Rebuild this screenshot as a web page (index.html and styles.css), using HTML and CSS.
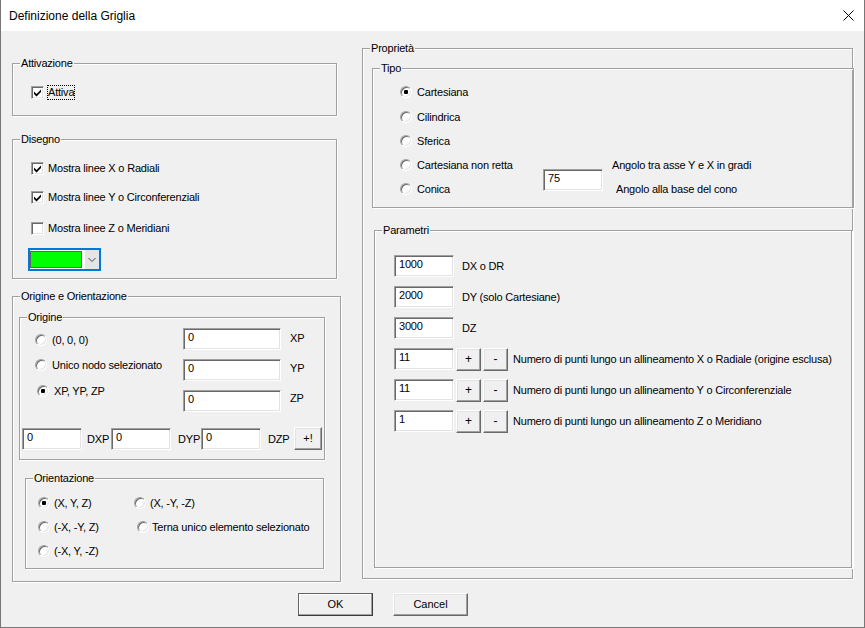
FILE: index.html
```html
<!DOCTYPE html>
<html lang="it">
<head>
<meta charset="utf-8">
<title>Definizione della Griglia</title>
<link rel="stylesheet" href="styles.css">
</head>
<body>
<div class="win">
  <div class="titlebar">
    <span class="title">Definizione della Griglia</span>
    <svg class="close" width="11" height="11" viewBox="0 0 11 11"><path d="M0.5 0.5 L10.5 10.5 M10.5 0.5 L0.5 10.5" stroke="#000" stroke-width="1" fill="none"/></svg>
  </div>
  <div class="client">
    <div class="main">
      <div class="col-left">
        <div class="group g-att">
          <div class="legend">Attivazione</div>
          <div class="chk att-row"><span class="cb"><svg width="13" height="13" viewBox="0 0 13 13"><path d="M3 5.5 L5.5 8 L10 3.5 L10 6 L5.5 10.5 L3 8 Z" fill="#000"/></svg></span><span class="lbl focus">Attiva</span></div>
        </div>
        <div class="group g-dis">
          <div class="legend">Disegno</div>
          <div class="chk dis-1"><span class="cb"><svg width="13" height="13" viewBox="0 0 13 13"><path d="M3 5.5 L5.5 8 L10 3.5 L10 6 L5.5 10.5 L3 8 Z" fill="#000"/></svg></span><span class="lbl">Mostra linee X o Radiali</span></div>
          <div class="chk dis-2"><span class="cb"><svg width="13" height="13" viewBox="0 0 13 13"><path d="M3 5.5 L5.5 8 L10 3.5 L10 6 L5.5 10.5 L3 8 Z" fill="#000"/></svg></span><span class="lbl">Mostra linee Y o Circonferenziali</span></div>
          <div class="chk dis-3"><span class="cb"></span><span class="lbl">Mostra linee Z o Meridiani</span></div>
          <div class="combo">
            <span class="swatch"></span>
            <span class="drop"><svg width="14" height="17" viewBox="0 0 14 17"><path d="M3.5 7 L7 10.5 L10.5 7" stroke="#444" stroke-width="1" fill="none"/></svg></span>
          </div>
        </div>
        <div class="group g-oo">
          <div class="legend">Origine e Orientazione</div>
          <div class="group g-orig">
            <div class="legend">Origine</div>
            <div class="orig-top">
              <div class="orig-rad">
                <div class="rad or-1"><span class="rb"></span><span class="rl">(0, 0, 0)</span></div>
                <div class="rad or-2"><span class="rb"></span><span class="rl">Unico nodo selezionato</span></div>
                <div class="rad or-3"><span class="rb on"></span><span class="rl">XP, YP, ZP</span></div>
              </div>
              <div class="orig-edits">
                <div class="edit e98 oe-1">0</div>
                <div class="edit e98 oe-2">0</div>
                <div class="edit e98 oe-3">0</div>
              </div>
              <div class="orig-lbls">
                <div class="ol ol-1">XP</div>
                <div class="ol ol-2">YP</div>
                <div class="ol ol-3">ZP</div>
              </div>
            </div>
            <div class="orig-bot">
              <div class="edit e60">0</div>
              <span class="dl dl-x">DXP</span>
              <div class="edit e60">0</div>
              <span class="dl dl-y">DYP</span>
              <div class="edit e60">0</div>
              <span class="dl dl-z">DZP</span>
              <button class="btn b-plus">+!</button>
            </div>
          </div>
          <div class="group g-orient">
            <div class="legend">Orientazione</div>
            <div class="orient-grid">
              <div class="rad o4"><span class="rb on"></span><span class="rl">(X, Y, Z)</span></div>
              <div class="rad o4"><span class="rb"></span><span class="rl">(X, -Y, -Z)</span></div>
              <div class="rad o4"><span class="rb"></span><span class="rl">(-X, -Y, Z)</span></div>
              <div class="rad o3 terna"><span class="rb"></span><span class="rl">Terna unico elemento selezionato</span></div>
              <div class="rad o4"><span class="rb"></span><span class="rl">(-X, Y, -Z)</span></div>
            </div>
          </div>
        </div>
      </div>
      <div class="col-right">
        <div class="group g-prop">
          <div class="legend">Proprietà</div>
          <div class="group g-tipo">
            <div class="legend">Tipo</div>
            <div class="tipo-body">
              <div class="tipo-rad">
                <div class="rad tr-1"><span class="rb on"></span><span class="rl">Cartesiana</span></div>
                <div class="rad tr-n"><span class="rb"></span><span class="rl">Cilindrica</span></div>
                <div class="rad tr-m"><span class="rb"></span><span class="rl">Sferica</span></div>
                <div class="rad tr-m"><span class="rb"></span><span class="rl">Cartesiana non retta</span></div>
                <div class="rad tr-m"><span class="rb"></span><span class="rl">Conica</span></div>
              </div>
              <div class="tipo-edit"><div class="edit e60">75</div></div>
              <div class="tipo-lbls">
                <div class="tl-1">Angolo tra asse Y e X in gradi</div>
                <div class="tl-2">Angolo alla base del cono</div>
              </div>
            </div>
          </div>
          <div class="group g-param">
            <div class="legend">Parametri</div>
            <div class="prow p-first"><div class="edit e60">1000</div><span class="pl">DX o DR</span></div>
            <div class="prow"><div class="edit e60">2000</div><span class="pl">DY (solo Cartesiane)</span></div>
            <div class="prow"><div class="edit e60">3000</div><span class="pl">DZ</span></div>
            <div class="prow"><div class="edit e60">11</div><button class="btn b-pm">+</button><button class="btn b-pm">-</button><span class="pl2">Numero di punti lungo un allineamento X o Radiale (origine esclusa)</span></div>
            <div class="prow"><div class="edit e60">11</div><button class="btn b-pm">+</button><button class="btn b-pm">-</button><span class="pl2">Numero di punti lungo un allineamento Y o Circonferenziale</span></div>
            <div class="prow"><div class="edit e60">1</div><button class="btn b-pm">+</button><button class="btn b-pm">-</button><span class="pl2">Numero di punti lungo un allineamento Z o Meridiano</span></div>
          </div>
        </div>
      </div>
    </div>
    <div class="btnbar">
      <button class="btn b-dlg b-default">OK</button>
      <button class="btn b-dlg b-cancel">Cancel</button>
    </div>
  </div>
</div>
</body>
</html>
```

FILE: styles.css
```css
body {
  margin: 0;
  background: #ffffff;
}

.win {
  width: 865px;
  height: 628px;
  box-sizing: border-box;
  border: 1px solid #777777;
  border-top: none;
  display: flex;
  flex-direction: column;
  font-family: "Liberation Sans", Arial, sans-serif;
  font-size: 11px;
  color: #000000;
  letter-spacing: -0.2px;
}

.titlebar {
  height: 31px;
  flex: none;
  background: #ffffff;
  display: flex;
  align-items: center;
  padding-left: 8px;
  padding-right: 10px;
  font-size: 12px;
  letter-spacing: 0;
}

.title {
  flex: 1;
  line-height: 16px;
}

.close {
  display: block;
  margin-top: 0;
}

.client {
  flex: 1;
  background: #f0f0f0;
  padding-left: 11px;
  display: flex;
  flex-direction: column;
}

.main {
  display: flex;
  align-items: flex-start;
}

.col-left {
  width: 329px;
  display: flex;
  flex-direction: column;
  align-items: flex-start;
}

.col-right {
  margin-left: 21px;
}

/* group boxes */
.group {
  box-sizing: border-box;
  border: 1px solid #a0a0a0;
  box-shadow: inset 1px 1px #ffffff, 1px 1px #ffffff;
  display: flex;
  flex-direction: column;
  align-items: flex-start;
  flex: none;
}

.legend {
  margin: -7px 0 0 7px;
  padding: 0 1px;
  height: 13px;
  line-height: 13px;
  background: #f0f0f0;
  white-space: nowrap;
}

.g-att { width: 325px; height: 53px; margin-top: 32px; }
.g-dis { width: 325px; height: 140px; margin-top: 23px; }
.g-oo { width: 329px; height: 286px; margin-top: 17px; }
.g-orig { width: 306px; height: 143px; margin: 14px 0 0 6px; }
.g-orient { width: 299px; height: 91px; margin: 18px 0 0 12px; }
.g-prop { width: 491px; height: 531px; margin-top: 17px; }
.g-tipo { width: 482px; height: 140px; margin: 13px 0 0 9px; }
.g-param { width: 478px; height: 338px; margin: 22px 0 0 11px; }

/* checkboxes */
.chk {
  display: flex;
  align-items: center;
  height: 13px;
  margin-left: 18px;
}

.att-row { margin-top: 16px; }
.dis-1 { margin-top: 16px; }
.dis-2 { margin-top: 16px; }
.dis-3 { margin-top: 18px; }

.cb {
  box-sizing: border-box;
  width: 13px;
  height: 13px;
  flex: none;
  position: relative;
  background: #ffffff;
  border: 1px solid;
  border-color: #a0a0a0 #ffffff #ffffff #a0a0a0;
  box-shadow: inset 1px 1px #696969, inset -1px -1px #e3e3e3;
}

.cb svg {
  display: block;
  margin: -1px 0 0 -1px;
}

.lbl {
  margin-left: 4px;
  line-height: 13px;
  white-space: nowrap;
  border: 1px solid transparent;
  margin-left: 3px;
}

.lbl.focus {
  border: 1px dotted #000000;
  line-height: 13px;
}

/* color combo */
.combo {
  box-sizing: border-box;
  width: 73px;
  height: 23px;
  margin: 13px 0 0 15px;
  border: 2px solid #0078d7;
  background: #ffffff;
  display: flex;
  align-items: flex-start;
}

.swatch {
  box-sizing: border-box;
  width: 52px;
  height: 17px;
  margin-top: 1px;
  background: #00ff00;
  border: 1px solid #646464;
}

.drop {
  margin-left: auto;
  width: 14px;
  height: 19px;
  background: #e5e5e5;
  display: flex;
  align-items: center;
}

.drop svg { display: block; }

/* radios */
.rad {
  display: flex;
  align-items: center;
  height: 12px;
}

.rb {
  box-sizing: border-box;
  width: 12px;
  height: 12px;
  flex: none;
  border-radius: 50%;
  background: #ffffff;
  border: 1px solid;
  border-color: #a0a0a0 #ffffff #ffffff #a0a0a0;
  box-shadow: inset 1px 1px #696969, inset -1px -1px #e3e3e3;
  display: flex;
  align-items: center;
  justify-content: center;
}

.rb.on::after {
  content: "";
  width: 4px;
  height: 4px;
  border-radius: 1px;
  background: #000000;
}

.rl {
  margin-left: 5px;
  line-height: 13px;
  white-space: nowrap;
}

.o4 .rl { margin-left: 4px; }
.o3 .rl { margin-left: 3px; }

/* edit boxes */
.edit {
  box-sizing: border-box;
  height: 22px;
  flex: none;
  background: #ffffff;
  border: 1px solid;
  border-color: #a0a0a0 #ffffff #ffffff #a0a0a0;
  box-shadow: inset 1px 1px #696969, inset -1px -1px #e3e3e3;
  padding: 2px 0 0 4px;
  line-height: 13px;
  white-space: nowrap;
}

.e98 { width: 98px; }
.e60 { width: 60px; }

/* Origine */
.orig-top {
  display: flex;
  align-items: flex-start;
}

.orig-rad {
  width: 163px;
  box-sizing: border-box;
  padding-left: 15px;
}

.or-1 { margin-top: 10px; }
.or-2 { margin-top: 13px; }
.or-3 { margin-top: 14px; margin-left: 2px; }

.oe-1 { margin-top: 4px; }
.oe-2, .oe-3 { margin-top: 9px; }

.orig-lbls { padding-left: 9px; }
.ol { line-height: 13px; }
.ol-1 { margin-top: 8px; }
.ol-2 { margin-top: 17px; }
.ol-3 { margin-top: 17px; }

.orig-bot {
  display: flex;
  align-items: center;
  margin: 15px 0 0 2px;
}

.dl {
  box-sizing: border-box;
  line-height: 13px;
  padding-top: 1px;
}

.dl-x { width: 29px; padding-left: 5px; }
.dl-y { width: 30px; padding-left: 7px; }
.dl-z { width: 33px; padding-left: 7px; }

/* buttons */
.btn {
  box-sizing: border-box;
  margin: 0;
  padding: 0;
  font-family: "Liberation Sans", Arial, sans-serif;
  font-size: 11px;
  color: #000000;
  background: #f0f0f0;
  border: 1px solid;
  border-color: #ffffff #696969 #696969 #ffffff;
  box-shadow: inset -1px -1px #a0a0a0, inset 1px 1px #e3e3e3;
  line-height: 13px;
  text-align: center;
}

.b-plus { width: 28px; height: 23px; }

.b-pm {
  width: 25px;
  height: 23px;
  margin-left: 2px;
  align-self: flex-start;
  font-size: 12px;
}

.b-dlg {
  width: 75px;
  height: 23px;
}

.b-default {
  border-color: #646464 #3c3c3c #3c3c3c #646464;
  box-shadow: inset -1px -1px #a0a0a0, inset 1px 1px #ffffff;
}

.b-cancel { margin-left: 20px; }

/* Orientazione */
.orient-grid {
  display: grid;
  grid-template-columns: 96px auto;
  grid-template-rows: 12px 12px 12px;
  row-gap: 12px;
  margin: 12px 0 0 12px;
}

.terna { margin-left: 3px; }

/* Tipo */
.tipo-body {
  display: flex;
  align-items: flex-start;
}

.tipo-rad {
  width: 170px;
  box-sizing: border-box;
  padding-left: 27px;
}

.tr-1 { margin-top: 11px; }
.tr-n { margin-top: 13px; }
.tr-m { margin-top: 12px; }

.tipo-edit { margin-top: 94px; }

.tipo-lbls { padding-left: 9px; }
.tl-1 { margin-top: 84px; line-height: 13px; white-space: nowrap; }
.tl-2 { margin-top: 11px; padding-left: 4px; line-height: 13px; white-space: nowrap; }

/* Parametri */
.prow {
  display: flex;
  align-items: center;
  height: 22px;
  margin: 9px 0 0 19px;
}

.prow.p-first { margin-top: 18px; }

.pl {
  margin-left: 8px;
  line-height: 13px;
  white-space: nowrap;
}

.pl2 {
  margin-left: 5px;
  line-height: 13px;
  white-space: nowrap;
}

/* dialog buttons */
.btnbar {
  display: flex;
  margin: 11px 0 0 286px;
}
```
